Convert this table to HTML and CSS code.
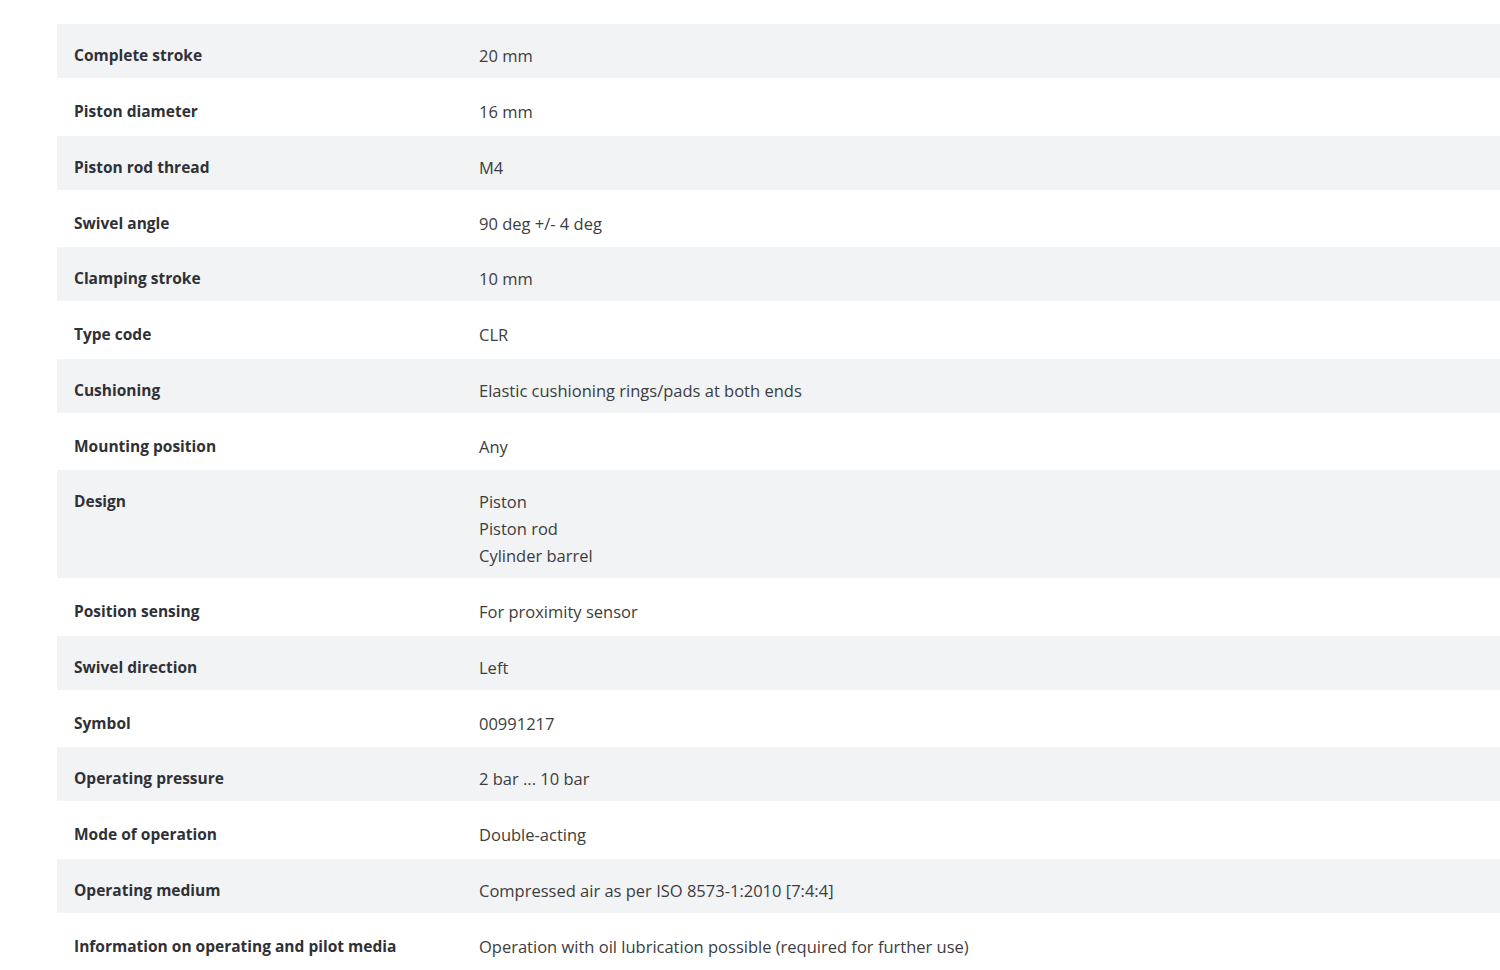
FILE: index.html
```html
<!DOCTYPE html>
<html lang="en">
<head>
<meta charset="utf-8">
<title>Technical data</title>
<link rel="stylesheet" href="styles.css">
</head>
<body>
<div class="page">
  <table class="specs">
    <tbody>
      <tr><th>Complete stroke</th><td>20 mm</td></tr>
      <tr><th>Piston diameter</th><td>16 mm</td></tr>
      <tr><th>Piston rod thread</th><td>M4</td></tr>
      <tr><th>Swivel angle</th><td>90 deg +/- 4 deg</td></tr>
      <tr><th>Clamping stroke</th><td>10 mm</td></tr>
      <tr><th>Type code</th><td>CLR</td></tr>
      <tr><th>Cushioning</th><td>Elastic cushioning rings/pads at both ends</td></tr>
      <tr><th>Mounting position</th><td>Any</td></tr>
      <tr><th>Design</th><td>Piston<br>Piston rod<br>Cylinder barrel</td></tr>
      <tr><th>Position sensing</th><td>For proximity sensor</td></tr>
      <tr><th>Swivel direction</th><td>Left</td></tr>
      <tr><th>Symbol</th><td>00991217</td></tr>
      <tr><th>Operating pressure</th><td>2 bar ... 10 bar</td></tr>
      <tr><th>Mode of operation</th><td>Double-acting</td></tr>
      <tr><th>Operating medium</th><td>Compressed air as per ISO 8573-1:2010 [7:4:4]</td></tr>
      <tr><th>Information on operating and pilot media</th><td>Operation with oil lubrication possible (required for further use)</td></tr>
    </tbody>
  </table>
</div>
</body>
</html>
```

FILE: styles.css
```css
html, body {
  margin: 0;
  padding: 0;
  background: #ffffff;
}
body {
  font-family: "Open Sans", "Noto Sans", sans-serif;
  color: #333333;
  overflow: hidden;
}
.page {
  padding: 24px 0 0 57px;
}
.specs {
  width: 1443px;
  border-collapse: collapse;
  line-height: 27px;
}
.specs th,
.specs td {
  text-align: left;
  vertical-align: top;
  padding: 18px 0 9px 0;
}
.specs th {
  width: 405px;
  padding-left: 17px;
  font-size: 15.5px;
  font-weight: 700;
  color: #2f3136;
}
.specs td {
  font-size: 16.5px;
  font-weight: 400;
  color: #3c3d40;
}
.specs tr:nth-child(odd) {
  background: #f2f3f5;
}
.specs tr:nth-child(even) th,
.specs tr:nth-child(even) td {
  padding-top: 20px;
  padding-bottom: 10.5px;
}
```
